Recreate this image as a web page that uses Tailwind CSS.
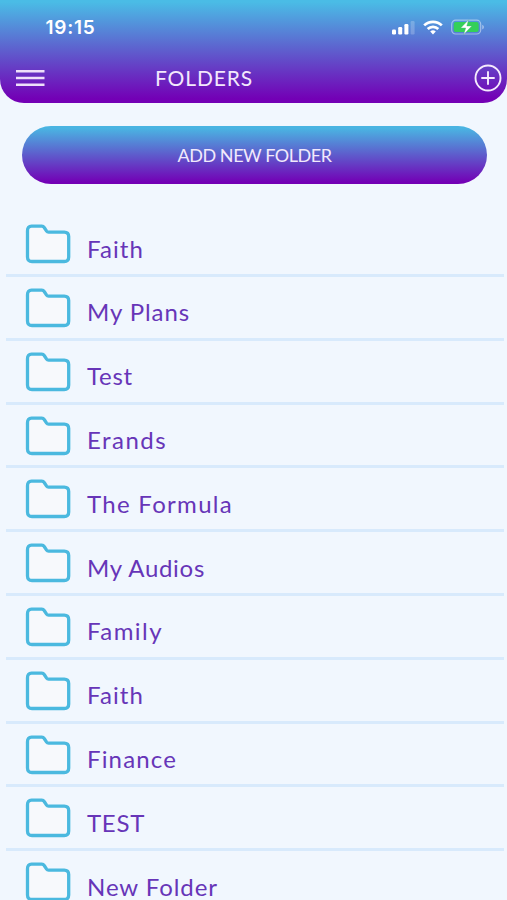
<!DOCTYPE html>
<html lang="en">
<head>
<meta charset="utf-8">
<meta name="viewport" content="width=device-width, initial-scale=1">
<title>Folders</title>
<script src="https://cdn.jsdelivr.net/npm/@tailwindcss/browser@4"></script>
</head>
<body class="h-[900px] overflow-hidden bg-[#f1f7fe] font-['Lato',sans-serif]">
<header class="flex h-[102.5px] flex-col rounded-b-[24px] bg-[linear-gradient(#4abce6_2%,#7300b5_96%)] text-white">
  <div class="flex h-[54px] items-center justify-between pr-[22px] pl-[45.5px]">
    <span data-width="50" class="mt-px whitespace-nowrap font-['Inter',sans-serif] text-[19px] leading-6 font-semibold">19:15</span>
    <div class="flex items-center gap-[8px]">
      <svg class="h-[15px] w-[23px]" viewBox="0 0 23 15" fill="#fff"><rect x="0" y="9.5" width="4" height="5" rx="1.2"/><rect x="6.2" y="7" width="4" height="7.5" rx="1.2"/><rect x="12.4" y="4" width="4" height="10.5" rx="1.2"/><rect x="18.6" y="1" width="4" height="13.5" rx="1.2" opacity=".22"/></svg>
      <svg class="h-[15px] w-[20px]" viewBox="0 0 20 15" fill="none" stroke="#fff" stroke-width="2.7"><path d="M1.2 5.4a12.5 12.5 0 0 1 17.6 0"/><path d="M4.7 9a7.5 7.5 0 0 1 10.6 0"/><path d="M10 14.5 7.2 11.6a4 4 0 0 1 5.6 0Z" fill="#fff" stroke="none"/></svg>
      <svg class="h-[16px] w-[34px]" viewBox="0 0 34 16"><rect x=".7" y="1.2" width="29" height="13.8" rx="4" fill="none" stroke="#fff" stroke-opacity=".45" stroke-width="1.2"/><rect x="2.7" y="3.1" width="25" height="10" rx="2.3" fill="#34d058"/><path d="M31.3 5.8v4.6q1.6-.7 1.6-2.3t-1.6-2.3Z" fill="#fff" opacity=".5"/><path d="M17.6.8 9.7 9h5l-2 6.5L20.8 7h-5Z" fill="#fff" stroke="#48b77b" stroke-width=".4"/></svg>
    </div>
  </div>
  <div class="flex h-[48px] items-center pl-4">
    <svg class="h-[18px] w-[29px]" viewBox="0 0 29 18" stroke="#eee0fa" stroke-width="2.4"><path d="M0 2.2h28.5M0 9h28.5M0 15.8h28.5"/></svg>
    <h1 data-width="98" class="ml-[110px] whitespace-nowrap text-[21px] leading-7 text-[#f3e8fc]">FOLDERS</h1>
    <svg class="mr-[5px] ml-auto h-[28px] w-[28px]" viewBox="0 0 28 28" fill="none" stroke="#f5eafd" stroke-width="1.9"><circle cx="14" cy="14" r="12.5"/><path d="M14 8v12M8 14h12" stroke-linecap="round"/></svg>
  </div>
</header>
<main>
  <button class="mt-[23.5px] ml-[22px] flex h-[58px] w-[465px] items-center justify-center rounded-full bg-[linear-gradient(#4ab4e2_4%,#7300b5_97%)] text-[#f1e9fc]">
    <span data-width="154" class="whitespace-nowrap text-[18px] leading-6">ADD NEW FOLDER</span>
  </button>
  <ul id="folders" class="mt-[29.2px] ml-[6px] w-[498px]"></ul>
</main>
<template id="row">
  <li class="flex h-[63.8px] items-start border-b-[3px] border-[#d8eafc] pl-[19px]">
    <svg class="mt-[11px] h-[40px] w-[46px] shrink-0" viewBox="0 0 46 40" fill="#f7f9fc" stroke="#4bb9df" stroke-width="3.3" stroke-linejoin="round"><path d="M6.5 2.2h10.3q1.6 0 2.4 1.3l2.4 3.6q.7 1 2 1H39.2q4.5 0 4.5 4.5V33q0 4.5-4.5 4.5H7q-4.5 0-4.5-4.5V6.7q0-4.5 4-4.5Z"/></svg>
    <span class="mt-[19.5px] ml-[16px] whitespace-nowrap text-[24px] leading-[32px] text-[#6735b8]"></span>
  </li>
</template>
<script>
const folders = [["Faith",57],["My Plans",103],["Test",46],["Erands",80],["The Formula",146],["My Audios",118],["Family",76],["Faith",57],["Finance",90],["TEST",58],["New Folder",131]];
const list = document.getElementById("folders");
for (const [name, width] of folders) {
  const row = document.getElementById("row").content.cloneNode(true);
  const label = row.querySelector("span");
  label.textContent = name;
  label.dataset.width = width;
  list.append(row);
}
// Track each label so that it fills its intended width.
function fitLabels() {
  for (const el of document.querySelectorAll("[data-width]")) {
    el.style.letterSpacing = "0px";
    const range = document.createRange();
    range.selectNodeContents(el);
    const spare = el.dataset.width - range.getBoundingClientRect().width;
    el.style.letterSpacing = spare / el.textContent.length + "px";
  }
}
fitLabels();
addEventListener("load", fitLabels);
new ResizeObserver(fitLabels).observe(document.querySelector("header"));
</script>
</body>
</html>
